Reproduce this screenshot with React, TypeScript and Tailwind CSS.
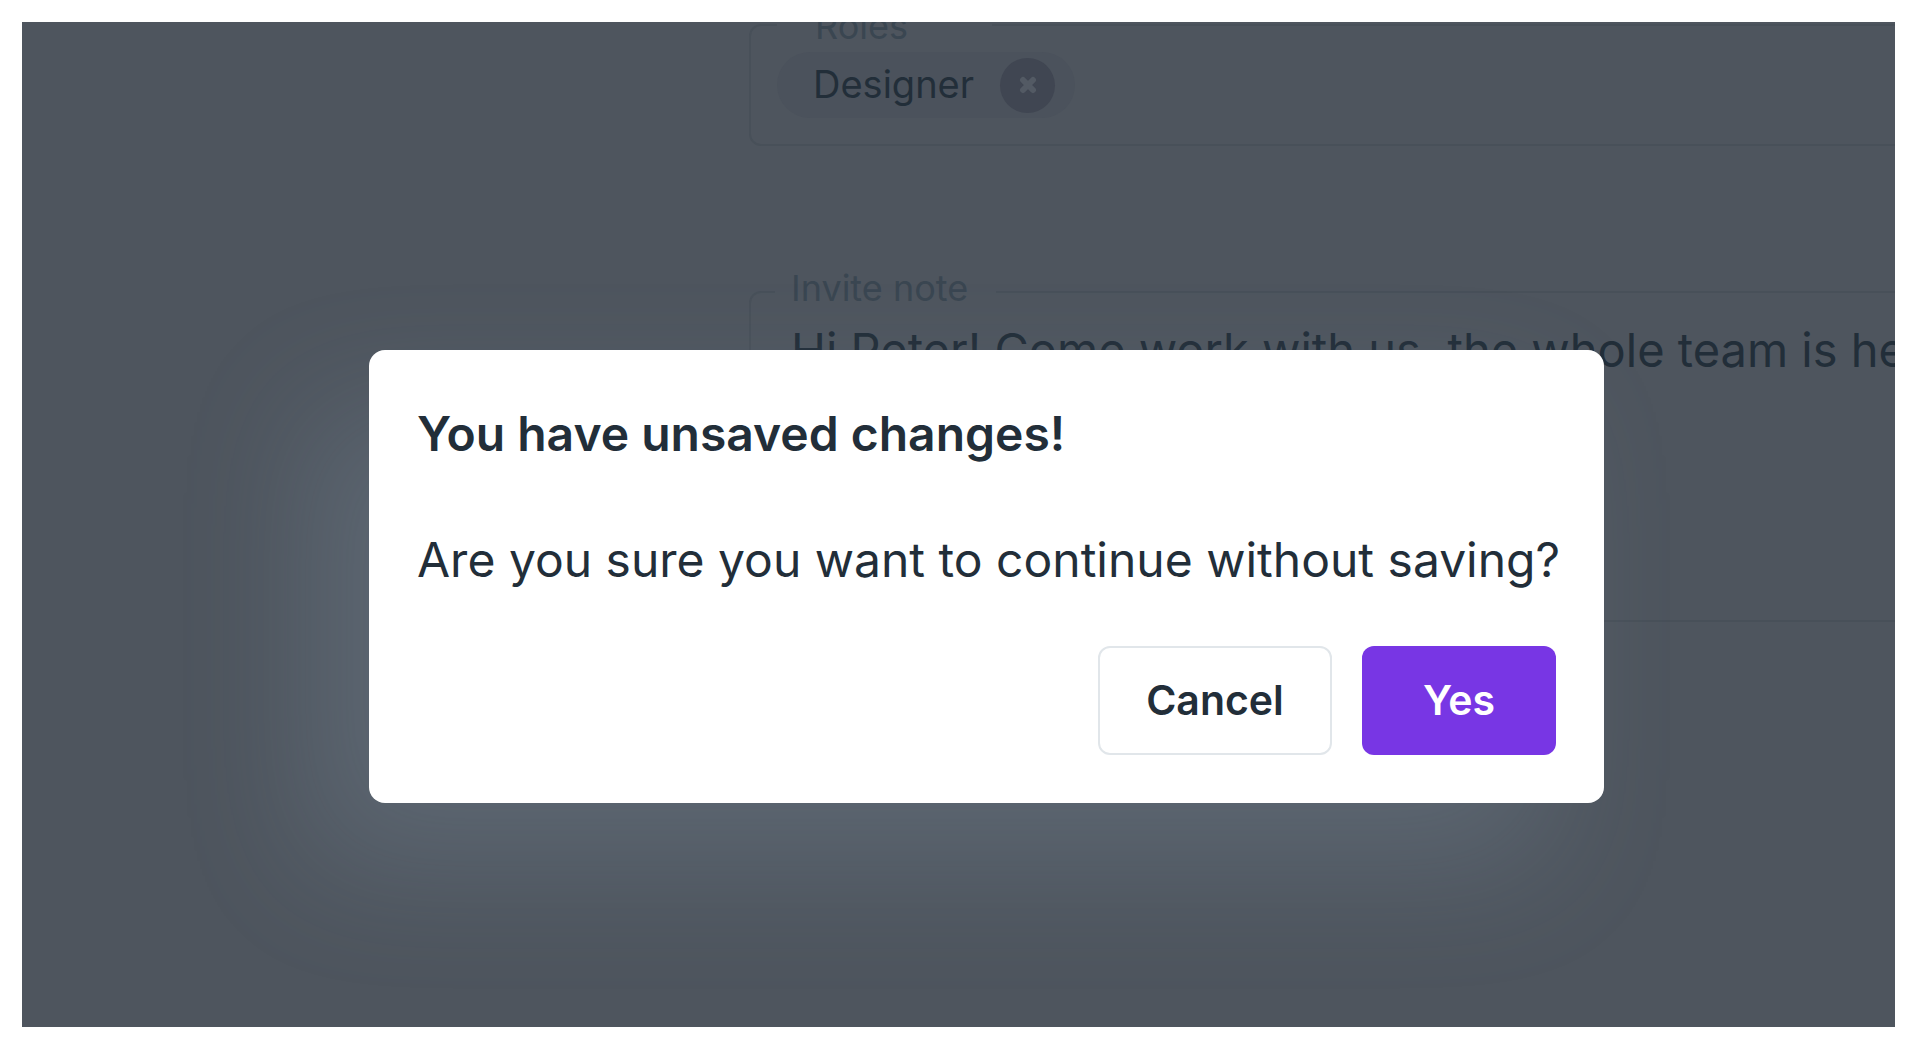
const noteText = "Hi Peter! Come work with us, the whole team is he";

const RemoveIcon = () => (
  <svg viewBox="0 0 18 18" className="size-[18px]" fill="none" stroke="#535a64" strokeWidth="6" strokeLinecap="round">
    <path d="M4 4 14 14M14 4 4 14" />
  </svg>
);

const InviteForm = () => {
  return (
    <form className="ml-[727px] -mr-10 -mt-5">
      <fieldset className="h-[144px] rounded-xl border-2 border-[#485059] pl-[26px]">
        <legend className="pl-[38px] pr-[84px] pt-0.5 text-[36px] leading-[44px] text-[#3a4651]">
          Roles
        </legend>
        <div className="mt-1 flex h-[66px] w-[298px] items-center justify-between rounded-full bg-[#4b525c] pl-9 pr-5">
          <span className="pb-0.5 text-[38px] leading-[44px] text-[#222e39]">Designer</span>
          <button
            type="button"
            aria-label="Remove Designer"
            className="grid size-[55px] place-items-center rounded-full bg-[#404652]"
          >
            <RemoveIcon />
          </button>
        </div>
      </fieldset>

      <fieldset className="mt-[120px] rounded-xl border-2 border-[#485059] pl-6">
        <legend className="pb-2 pl-4 pr-7 text-[36px] leading-[44px] text-[#3a4651]">
          <label htmlFor="note">Invite note</label>
        </legend>
        <textarea
          id="note"
          wrap="off"
          defaultValue={noteText}
          className="block h-[302px] w-full resize-none overflow-hidden bg-transparent pl-4 pt-1 text-[47px] leading-[56px] text-[#222e39] outline-none"
        />
      </fieldset>
    </form>
  );
};

const UnsavedDialog = () => {
  return (
    <div className="absolute inset-0 flex items-center justify-center pl-14 pt-[104px]">
      <div
        role="dialog"
        aria-labelledby="dialog-title"
        className="w-full max-w-[1235px] rounded-2xl bg-white p-12 text-[#222e39] shadow-[-60px_60px_130px_#a0b8cc2e]"
      >
        <h2 id="dialog-title" className="mt-2 text-[48px] font-semibold leading-[56px]">
          You have unsaved changes!
        </h2>
        <p className="mt-[70px] whitespace-nowrap text-[48px] leading-[56px]">
          Are you sure you want to continue without saving?
        </p>
        <div className="mt-[58px] flex justify-end gap-[30px]">
          <button
            type="button"
            className="h-[109px] w-[234px] rounded-xl border-2 border-[#e1e6ea] text-[41px] font-semibold"
          >
            Cancel
          </button>
          <button
            type="button"
            className="h-[109px] w-[194px] rounded-xl bg-[#7836e4] text-[41px] font-semibold text-white"
          >
            Yes
          </button>
        </div>
      </div>
    </div>
  );
};

const App = () => {
  return (
    <main className="h-screen bg-white p-[22px] font-['Inter',sans-serif]">
      <div className="relative h-full overflow-hidden bg-[#4e555e]">
        <InviteForm />
        <UnsavedDialog />
      </div>
    </main>
  );
};

export default App;
